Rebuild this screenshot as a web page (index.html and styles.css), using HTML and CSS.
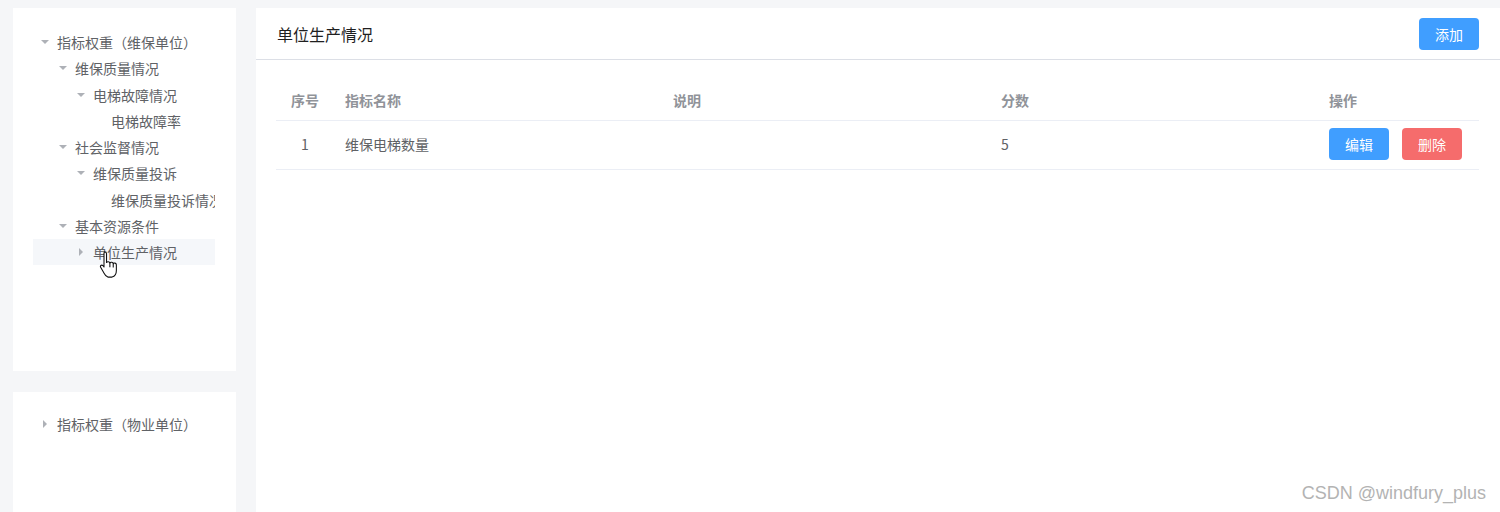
FILE: index.html
```html
<!DOCTYPE html>
<html lang="zh-CN">
<head>
<meta charset="utf-8">
<title>单位生产情况</title>
<link rel="stylesheet" href="styles.css">
</head>
<body>
<div class="layout">
  <aside class="side">
    <div class="card card-top">
      <ul class="tree">
        <li class="node"><span class="caret down"></span><span class="label">指标权重（维保单位）</span></li>
        <li class="node lv2"><span class="caret down"></span><span class="label">维保质量情况</span></li>
        <li class="node lv3"><span class="caret down"></span><span class="label">电梯故障情况</span></li>
        <li class="node lv4"><span class="caret none"></span><span class="label">电梯故障率</span></li>
        <li class="node lv2"><span class="caret down"></span><span class="label">社会监督情况</span></li>
        <li class="node lv3"><span class="caret down"></span><span class="label">维保质量投诉</span></li>
        <li class="node lv4"><span class="caret none"></span><span class="label">维保质量投诉情况</span></li>
        <li class="node lv2"><span class="caret down"></span><span class="label">基本资源条件</span></li>
        <li class="node lv3 hover"><span class="caret right"></span><span class="label">单位生产情况</span></li>
      </ul>
      <svg class="cursor" width="24" height="29" viewBox="0 0 20 24"><path d="M5.5 1.5c1 0 1.6.7 1.6 1.6v7.2c.3-.9 2.6-.9 2.8.4.5-1 2.6-.8 2.8.6.5-.9 2.6-.6 2.6 1v4.6c0 2.6-1.3 4.9-3.6 5.6H8.2c-1.3-.5-2.3-1.6-3-3L2.2 14.3c-.6-1 .5-2.4 1.8-1.5l1 1.3V3.1c0-.9.4-1.6.5-1.6z" fill="#fff" stroke="#111" stroke-width="0.9" stroke-linejoin="round"/><path d="M9.9 10.6v3.6M12.7 11.2v3.2" stroke="#111" stroke-width="0.9"/></svg>
    </div>
    <div class="card card-bottom">
      <ul class="tree">
        <li class="node"><span class="caret right"></span><span class="label">指标权重（物业单位）</span></li>
      </ul>
    </div>
  </aside>
  <main class="panel">
    <header class="panel-head">
      <h2 class="panel-title">单位生产情况</h2>
      <button class="btn btn-primary">添加</button>
    </header>
    <div class="panel-body">
      <div class="table">
        <div class="row head">
          <div class="cell center">序号</div>
          <div class="cell">指标名称</div>
          <div class="cell">说明</div>
          <div class="cell">分数</div>
          <div class="cell">操作</div>
        </div>
        <div class="row body">
          <div class="cell center">1</div>
          <div class="cell">维保电梯数量</div>
          <div class="cell"></div>
          <div class="cell">5</div>
          <div class="cell ops"><button class="btn btn-primary">编辑</button><button class="btn btn-danger">删除</button></div>
        </div>
      </div>
    </div>
    <div class="watermark">CSDN @windfury_plus</div>
  </main>
</div>
</body>
</html>
```

FILE: styles.css
```css
* { box-sizing: border-box; }
html, body { margin: 0; padding: 0; }
body {
  background: #f5f6f8;
  font-family: "Noto Sans CJK SC", "Noto Sans", sans-serif;
  font-size: 14px;
  color: #606266;
  overflow: hidden;
  height: 512px;
}
.layout {
  display: flex;
  gap: 20px;
  padding: 8px 0 0 13px;
  height: 100%;
}
.side {
  width: 223px;
  display: flex;
  flex-direction: column;
  gap: 21px;
  flex-shrink: 0;
}
.card {
  background: #fff;
  padding: 21px 21px 20px 20px;
  flex-shrink: 0;
  position: relative;
}
.card-top { height: 363px; }
.card-bottom { height: 140px; padding-top: 19px; }
.tree {
  list-style: none;
  margin: 0;
  padding: 0;
  overflow: hidden;
}
.node {
  display: flex;
  align-items: center;
  height: 26.25px;
  white-space: nowrap;
  color: #606266;
  font-size: 14px;
}
.node.lv2 { padding-left: 18px; }
.node.lv3 { padding-left: 36px; }
.node.lv4 { padding-left: 54px; }
.node.hover { background: #f5f7fa; }
.caret {
  width: 24px;
  height: 12px;
  flex-shrink: 0;
  position: relative;
}
.caret::after {
  content: "";
  position: absolute;
  border-style: solid;
  border-color: transparent;
}
.caret.down::after {
  left: 8px;
  top: 4px;
  border-width: 4.5px 4px 0 4px;
  border-top-color: #aeb1b7;
}
.caret.right::after {
  left: 10px;
  top: 2px;
  border-width: 4px 0 4px 4.5px;
  border-left-color: #aeb1b7;
}
.caret.none::after { display: none; }
.label { line-height: 26px; }
.cursor {
  position: absolute;
  left: 85px;
  top: 242px;
}
.panel {
  flex: 1;
  background: #fff;
  position: relative;
  min-height: 504px;
}
.panel-head {
  display: flex;
  align-items: center;
  justify-content: space-between;
  height: 52px;
  padding: 10px 21px 10px 21px;
  border-bottom: 1px solid #dcdfe6;
}
.panel-title {
  margin: 0;
  font-size: 16px;
  font-weight: normal;
  color: #1f1f1f;
}
.btn {
  border: 0;
  border-radius: 4px;
  height: 32px;
  width: 60px;
  font-family: inherit;
  font-size: 14px;
  color: #fff;
  padding: 0;
  cursor: pointer;
}
.btn-primary { background: #409eff; }
.btn-danger { background: #f56c6c; }
.panel-body {
  padding: 20px 21px 0 20px;
}
.table { width: 100%; }
.row {
  display: grid;
  grid-template-columns: 58px 1fr 1fr 1fr 161px;
  border-bottom: 1px solid #ebeef5;
  align-items: center;
}
.row.head { height: 41px; padding-bottom: 1px; }
.row.body { height: 49px; padding-bottom: 2px; }
.cell {
  padding: 0 11px;
  white-space: nowrap;
}
.row.head .cell {
  font-weight: bold;
  color: #909399;
}
.cell.center { text-align: center; }
.ops {
  display: flex;
  gap: 13px;
  padding-left: 11px;
}
.watermark {
  position: absolute;
  right: 14px;
  bottom: 8px;
  font-family: "Liberation Sans", Arial, sans-serif;
  font-size: 18px;
  color: #b3b3b3;
}
```
